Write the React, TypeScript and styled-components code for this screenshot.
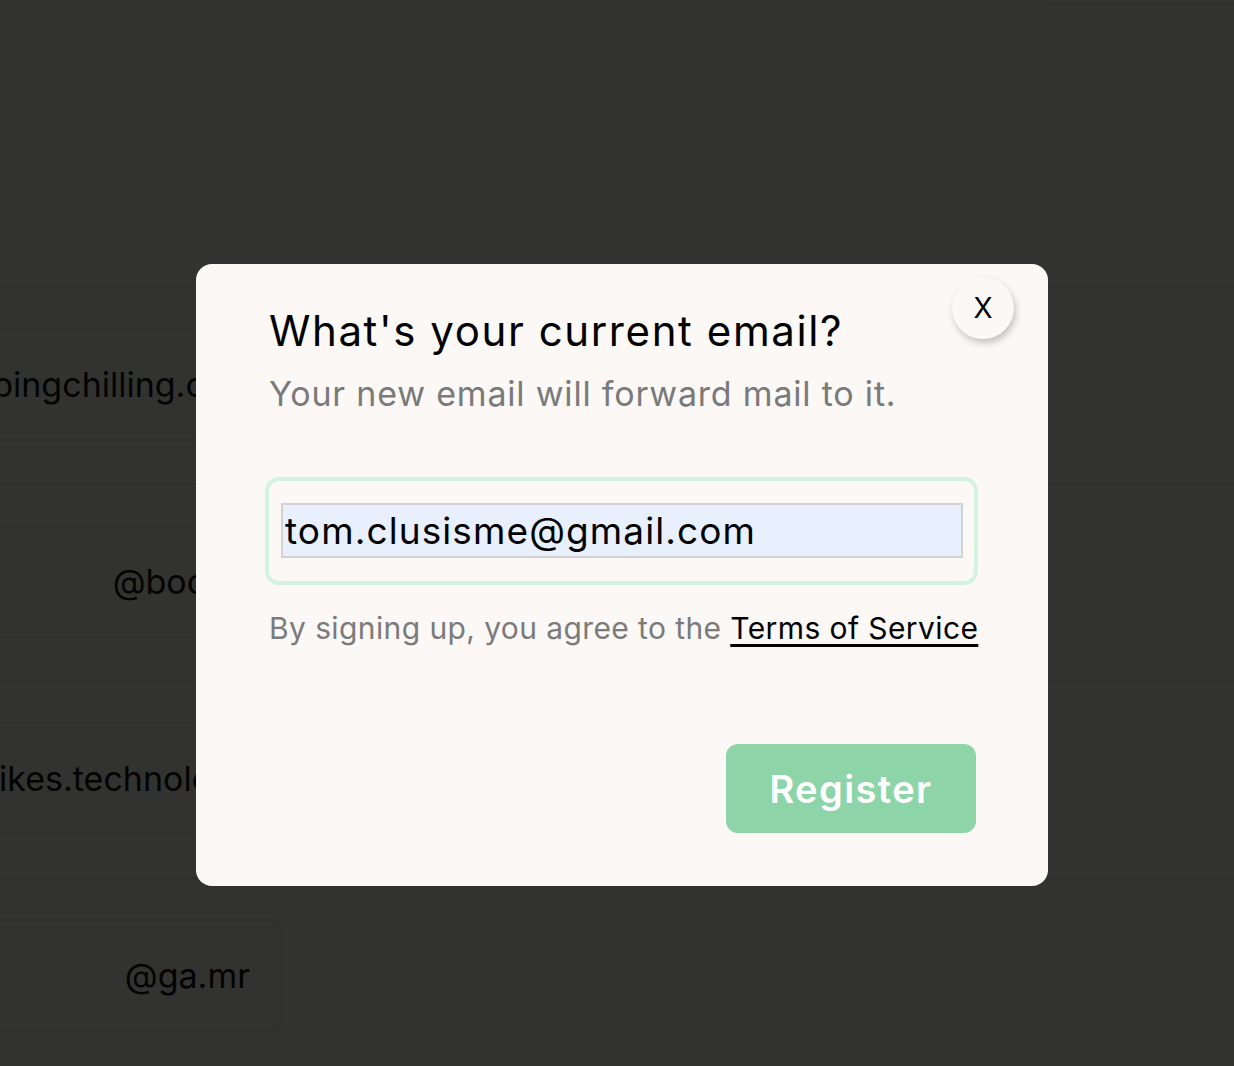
import styled, {createGlobalStyle} from "styled-components";

const GlobalStyle = createGlobalStyle`
    html, body {
        margin: 0;
        padding: 0;
        background: #fbf8f5;
        font-family: Inter, "Noto Sans", sans-serif;
        overflow: hidden;
    }
`

const Page = styled.div`
    width: 1234px;
    height: 1066px;
    background: #fbf8f5;
    overflow: hidden;
`

const Header = styled.div`
    height: 286px;
    display: flex;
    justify-content: flex-end;
    align-items: flex-start;
`

const TopBox = styled.div`
    width: 188px;
    height: 3px;
    border: 2px solid #e4e4e4;
    border-top: none;
    border-right: none;
    border-radius: 0 0 0 12px;
`

const Section = styled.div`
    border-top: 2px solid #e6e6e6;
    padding: 40px 0 42px;
`

const Card = styled.div<{ $width: number }>`
    width: ${p => p.$width}px;
    margin-left: -60px;
    height: 113px;
    box-sizing: border-box;
    border: 2px solid #e6e6e6;
    border-radius: 14px;
    display: flex;
    align-items: center;
    justify-content: flex-end;
    padding-right: 31px;
    font-size: 34px;
    color: #111;
    white-space: nowrap;
    overflow: hidden;
`

const Overlay = styled.div`
    position: fixed;
    inset: 0;
    background: rgba(0, 0, 0, 0.8);
    display: flex;
    align-items: flex-start;
`

const Modal = styled.div`
    position: relative;
    margin: 264px 0 0 196px;
    width: 852px;
    height: 622px;
    box-sizing: border-box;
    background: #fbf8f5;
    border-radius: 16px;
    padding: 40px 72px 53px 73px;
    display: flex;
    flex-direction: column;
`

const CloseButton = styled.button`
    position: absolute;
    top: 13px;
    right: 34px;
    width: 62px;
    height: 62px;
    border-radius: 50%;
    border: none;
    background: #fbf8f5;
    box-shadow: 2px 4px 7px rgba(0, 0, 0, 0.22);
    font-family: Inter, sans-serif;
    font-size: 28px;
    color: #000;
    display: flex;
    align-items: center;
    justify-content: center;
    padding: 0;
`

const Title = styled.h2`
    margin: 0;
    font-size: 42px;
    letter-spacing: 1.6px;
    font-weight: 400;
    line-height: 54px;
    color: #000;
`

const Subtitle = styled.p`
    margin: 14px 0 0;
    font-size: 34px;
    letter-spacing: 0.8px;
    line-height: 44px;
    color: #7a7a7a;
`

const InputRing = styled.div`
    margin-top: 61px;
    width: 713px;
    margin-left: -4px;
    box-sizing: border-box;
    border: 4px solid #d3f3df;
    border-radius: 14px;
    padding: 22px 11px 23px 12px;
`

const EmailInput = styled.input`
    width: 100%;
    height: 55px;
    box-sizing: border-box;
    border: 2px solid #d2d2d2;
    background: #e8f0fe;
    font-family: Inter, sans-serif;
    font-size: 37px;
    letter-spacing: 1.1px;
    color: #000;
    padding: 0 2px;
    outline: none;
`

const Terms = styled.p`
    margin: 23px 0 0;
    font-size: 30px;
    letter-spacing: 0.4px;
    line-height: 40px;
    color: #7b7b7b;
    white-space: nowrap;

    a {
        color: #000;
        text-decoration: underline;
        text-underline-offset: 5px;
    }
`

const Footer = styled.div`
    margin-top: auto;
    display: flex;
    justify-content: flex-end;
`

const RegisterButton = styled.button`
    width: 250px;
    height: 89px;
    border: none;
    border-radius: 12px;
    background: #8dd5a9;
    color: #fff;
    font-family: Inter, sans-serif;
    font-size: 38px;
    letter-spacing: 1.4px;
    font-weight: 600;
`

const rows = [
    {text: "@bingchilling.com", width: 348},
    {text: "@boomerang.io", width: 461},
    {text: "@bikes.technology", width: 345},
    {text: "@ga.mr", width: 343},
];

const App = () => {
    return (
        <>
            <GlobalStyle/>
            <Page>
                <Header>
                    <TopBox/>
                </Header>
                {rows.map(row => (
                    <Section key={row.text}>
                        <Card $width={row.width}>{row.text}</Card>
                    </Section>
                ))}
            </Page>
            <Overlay>
                <Modal>
                    <CloseButton>X</CloseButton>
                    <Title>What's your current email?</Title>
                    <Subtitle>Your new email will forward mail to it.</Subtitle>
                    <InputRing>
                        <EmailInput defaultValue="tom.clusisme@gmail.com"/>
                    </InputRing>
                    <Terms>By signing up, you agree to the <a href="#">Terms of Service</a></Terms>
                    <Footer>
                        <RegisterButton>Register</RegisterButton>
                    </Footer>
                </Modal>
            </Overlay>
        </>
    );
};

export default App;
